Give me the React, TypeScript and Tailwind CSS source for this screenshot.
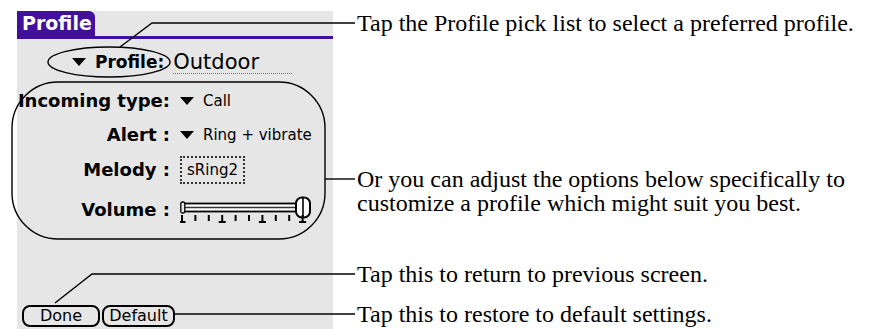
import React from "react";

const PURPLE = "#42109c";

function DownArrow() {
  return (
    <svg width="14" height="8" viewBox="0 0 14 8" className="shrink-0">
      <polygon points="0,0 14,0 7,8" fill="#000" />
    </svg>
  );
}

function VolumeSlider() {
  const ticks = Array.from({ length: 10 }, (_, i) => 2 + i * 13.4);
  return (
    <svg width="134" height="28" viewBox="0 0 134 28">
      {/* track */}
      <rect x="2" y="7.5" width="115" height="8" fill="#fff" stroke="#000" strokeWidth="1.8" />
      <line x1="3" y1="11.5" x2="116" y2="11.5" stroke="#333" strokeWidth="1.6" />
      <rect x="0.8" y="6" width="4" height="11" rx="1.5" fill="#e6e6e6" stroke="#000" strokeWidth="1.3" />
      {/* knob */}
      <rect x="116" y="1.5" width="14" height="20" rx="6" fill="#fff" stroke="#000" strokeWidth="2" />
      <line x1="123" y1="2" x2="123" y2="21" stroke="#000" strokeWidth="1.6" />
      {/* ticks */}
      {ticks.map((x, i) =>
        i % 3 === 0 ? (
          <g key={i}>
            <line x1={x} y1="19" x2={x} y2="26" stroke="#000" strokeWidth="2" />
            <line x1={x - 3.5} y1="26" x2={x + 3.5} y2="26" stroke="#000" strokeWidth="2" />
          </g>
        ) : (
          <line key={i} x1={x} y1="19" x2={x} y2="25" stroke="#000" strokeWidth="2" />
        ),
      )}
    </svg>
  );
}

function Row({ label, children, className }: { label: string; children: React.ReactNode; className: string }) {
  return (
    <div className={`flex items-center ${className}`}>
      <span className="w-[153px] shrink-0 text-right font-bold text-[18px] leading-none">{label}</span>
      <div className="ml-[10px] flex items-center gap-[9px] text-[15px] leading-none">{children}</div>
    </div>
  );
}

export default function App() {
  return (
    <div className="relative w-[870px] h-[329px] bg-white overflow-hidden flex">
      {/* Palm screen */}
      <div className="ml-[17px] mt-[11px] w-[316px] h-[318px] bg-[#e6e6e6] flex flex-col font-['DejaVu_Sans',sans-serif] text-black">
        <div className="flex border-b-[3px] border-[#42109c]">
          <div
            className="h-[25px] w-[78px] rounded-tr-[6px] pl-[5px] flex items-center text-white font-bold text-[19px] leading-none"
            style={{ background: PURPLE }}
          >
            Profile
          </div>
        </div>

        <div className="mt-[11px] h-[24px] flex items-center pl-[55px]">
          <DownArrow />
          <span className="ml-[9px] font-bold text-[17px] leading-none">Profile:</span>
          <span className="ml-[9px] w-[119px] border-b border-dotted border-[#777] text-[21px] leading-[22px]">
            Outdoor
          </span>
        </div>

        <Row label="Incoming type:" className="mt-[15px] h-[24px]">
          <DownArrow />
          <span>Call</span>
        </Row>
        <Row label="Alert :" className="mt-[10px] h-[24px]">
          <DownArrow />
          <span>Ring + vibrate</span>
        </Row>
        <Row label="Melody :" className="mt-[9px] h-[28px]">
          <span className="h-[28px] px-[5px] flex items-center border-2 border-dotted border-[#333]">sRing2</span>
        </Row>
        <Row label="Volume :" className="mt-[12px] h-[28px]">
          <VolumeSlider />
        </Row>

        <div className="mt-auto mb-[2px] ml-[5px] flex gap-[2px] text-[16px]">
          <button className="w-[78px] h-[22px] border-2 border-black rounded-[8px] leading-none">Done</button>
          <button className="w-[73px] h-[22px] border-2 border-black rounded-[8px] leading-none">Default</button>
        </div>
      </div>

      {/* Captions */}
      <div className="ml-[24px] flex flex-col font-['Liberation_Serif',serif] text-[24px] leading-[24px] text-black whitespace-nowrap">
        <p className="mt-[11px]">Tap the Profile pick list to select a preferred profile.</p>
        <p className="mt-[132px]">
          Or you can adjust the options below specifically to
          <br />
          customize a profile which might suit you best.
        </p>
        <p className="mt-[47px]">Tap this to return to previous screen.</p>
        <p className="mt-[16px]">Tap this to restore to default settings.</p>
      </div>

      {/* Callout lines */}
      <svg className="absolute inset-0 pointer-events-none" width="870" height="329" viewBox="0 0 870 329">
        <g fill="none" stroke="#000" strokeWidth="1.4">
          <ellipse cx="109" cy="62" rx="61" ry="15" />
          <polyline points="120,47 152,23 355,23" />
          <rect x="12" y="82" width="313" height="157" rx="46" />
          <line x1="325" y1="179" x2="355" y2="179" />
          <polyline points="55,303 92,274 355,274" />
          <line x1="175" y1="314" x2="355" y2="314" />
        </g>
      </svg>
    </div>
  );
}
